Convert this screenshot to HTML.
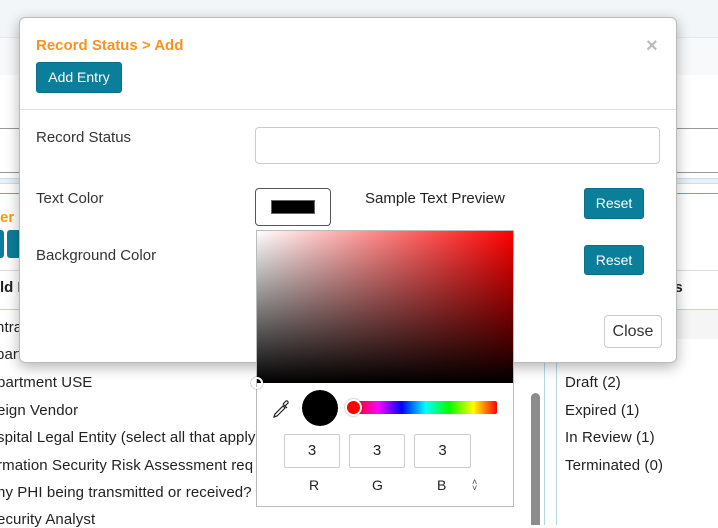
<!DOCTYPE html>
<html><head><style>
*{box-sizing:border-box}
body{margin:0;width:718px;height:525px;overflow:hidden;background:#fff;font-family:"Liberation Sans",Arial,sans-serif;color:#333;position:relative}
.a{position:absolute}
.row{position:absolute;font-size:15px;color:#222;white-space:nowrap;letter-spacing:0.1px}
.btn{position:absolute;background:#0b7f99;color:#fff;border:1px solid #09708a;border-radius:3px;font-size:14px;text-align:center;font-weight:500}
.inp{position:absolute;border:1px solid #ccc;border-radius:2px;font-size:15px;text-align:center;line-height:32px;color:#222}
</style></head><body>
<div class="a" style="left:0;top:0;width:718px;height:37px;background:#f2f6f9"></div>
<div class="a" style="left:0;top:37px;width:718px;height:1px;background:#e3e8ec"></div>
<div class="a" style="left:0;top:38px;width:718px;height:37px;background:#f8f9fa"></div>
<div class="a" style="left:0;top:128px;width:718px;height:1px;background:#999"></div>
<div class="a" style="left:0;top:172px;width:718px;height:1px;background:#999"></div>
<div class="a" style="left:0;top:178px;width:718px;height:6px;background:#e6f2f8;border-top:1px solid #cde;border-bottom:1px solid #cde"></div>
<div class="a" style="left:0;top:193px;width:718px;height:1px;background:#7a9cc6"></div>
<div class="a" style="left:0;top:209px;color:#f39c12;font-weight:bold;font-size:15px">er &gt;</div>
<div class="a" style="left:0;top:230px;width:4px;height:28px;background:#0b7f99;border-radius:0 3px 3px 0"></div>
<div class="a" style="left:7px;top:230px;width:14px;height:28px;background:#0b7f99;border-radius:3px"></div>
<div class="a" style="left:0;top:270px;width:718px;height:1px;background:#ddd"></div>
<div class="a" style="left:0;top:279px;font-weight:bold;font-size:15px;color:#222">ld L</div>
<div class="a" style="left:666px;top:279px;font-weight:bold;font-size:15px;color:#222">es</div>
<div class="a" style="left:0;top:309px;width:718px;height:1px;background:#b5d8ea"></div>
<div class="a" style="left:556px;top:310px;width:162px;height:29px;background:#f5f5f5"></div>
<div class="row" style="left:-4px;top:319px">ntra</div>
<div class="row" style="left:-4px;top:346px">part</div>
<div class="row" style="left:-3px;top:374px">partment USE</div>
<div class="row" style="left:-3px;top:402px">eign Vendor</div>
<div class="row" style="left:-3px;top:429px">spital Legal Entity (select all that apply)</div>
<div class="row" style="left:-3px;top:457px">rmation Security Risk Assessment req</div>
<div class="row" style="left:-3px;top:484px">ny PHI being transmitted or received?</div>
<div class="row" style="left:-3px;top:511px">ecurity Analyst</div>
<div class="a" style="left:544px;top:363px;width:1px;height:162px;background:#b5d8ea"></div>
<div class="a" style="left:556px;top:363px;width:1px;height:162px;background:#b5d8ea"></div>
<div class="a" style="left:531px;top:393px;width:9px;height:132px;background:#8c8c8c;border-radius:5px 5px 0 0"></div>
<div class="row" style="left:565px;top:374px">Draft (2)</div>
<div class="row" style="left:565px;top:402px">Expired (1)</div>
<div class="row" style="left:565px;top:429px">In Review (1)</div>
<div class="row" style="left:565px;top:457px">Terminated (0)</div>

<div class="a" style="left:19px;top:17px;width:658px;height:346px;background:#fff;border:1px solid #bbb;border-radius:6px;box-shadow:0 4px 14px rgba(0,0,0,.3)">
  <div class="a" style="left:16px;top:19px;color:#f7931e;font-weight:bold;font-size:15px">Record Status &gt; Add</div>
  <div class="a" style="left:626px;top:17px;color:#bbb;font-size:20px;font-weight:bold">×</div>
  <div class="btn" style="left:16px;top:44px;width:86px;height:31px;line-height:29px">Add Entry</div>
  <div class="a" style="left:0;top:91px;width:656px;height:1px;background:#e0e0e0"></div>
  <div class="a" style="left:16px;top:111px;font-size:15px;color:#333">Record Status</div>
  <div class="a" style="left:235px;top:109px;width:405px;height:37px;border:1px solid #ccc;border-radius:4px"></div>
  <div class="a" style="left:16px;top:172px;font-size:15px;color:#333">Text Color</div>
  <div class="a" style="left:235px;top:170px;width:76px;height:38px;border:1px solid #555;border-radius:4px;background:#fff"><div class="a" style="left:15px;top:11px;width:44px;height:14px;background:#000;border:1px solid #666"></div></div>
  <div class="a" style="left:345px;top:172px;font-size:15px;color:#222">Sample Text Preview</div>
  <div class="btn" style="left:564px;top:170px;width:60px;height:31px;line-height:29px">Reset</div>
  <div class="a" style="left:16px;top:229px;font-size:15px;color:#333">Background Color</div>
  <div class="btn" style="left:564px;top:227px;width:60px;height:30px;line-height:28px">Reset</div>
  <div class="a" style="left:584px;top:297px;width:58px;height:33px;border:1px solid #ccc;border-radius:4px;font-size:16px;line-height:31px;text-align:center;color:#333">Close</div>
</div>

<div class="a" style="left:256px;top:230px;width:258px;height:277px;background:#fff;border:1px solid #bbb">
  <div class="a" style="left:0;top:0;width:256px;height:152px;background:linear-gradient(to bottom,rgba(0,0,0,0),#000),linear-gradient(to right,#fff,#f00)"></div>
  <div class="a" style="left:-6px;top:146px;width:12px;height:12px;border:2px solid #fff;border-radius:50%;box-shadow:0 0 1px #000"></div>
  <svg class="a" style="left:15px;top:168px" width="20" height="20" viewBox="0 0 20 20"><path d="M2 18 L3 15 L11 7 L13 9 L5 17 Z M11 5 L15 9 M13 7 L16 4 A1.5 1.5 0 0 0 14 2 L11 5" fill="none" stroke="#222" stroke-width="1.2"/></svg>
  <div class="a" style="left:45px;top:159px;width:36px;height:36px;border-radius:50%;background:#000"></div>
  <div class="a" style="left:97px;top:170px;width:143px;height:13px;border-radius:2px;background:linear-gradient(to right,#f00,#f0f,#00f,#0ff,#0f0,#ff0,#f00)"></div>
  <div class="a" style="left:88px;top:168px;width:17px;height:17px;border-radius:50%;background:#f00;border:2px solid #fff;box-shadow:0 0 2px rgba(0,0,0,.4)"></div>
  <div class="inp" style="left:27px;top:203px;width:56px;height:34px">3</div>
  <div class="inp" style="left:92px;top:203px;width:56px;height:34px">3</div>
  <div class="inp" style="left:157px;top:203px;width:57px;height:34px">3</div>
  <div class="a" style="left:52px;top:246px;font-size:14px;color:#222">R</div>
  <div class="a" style="left:115px;top:246px;font-size:14px;color:#222">G</div>
  <div class="a" style="left:180px;top:246px;font-size:14px;color:#222">B</div>
  <div class="a" style="left:215px;top:248px;font-size:9px;color:#444;line-height:6px">˄<br>˅</div>
</div>
</body></html>
